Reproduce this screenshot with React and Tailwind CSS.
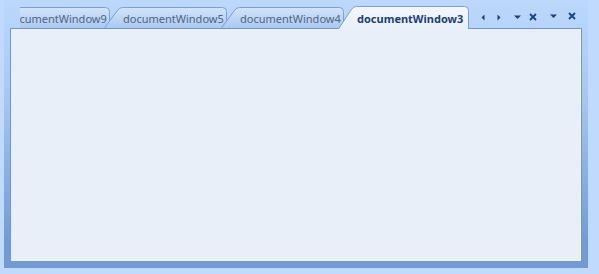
import React from "react";

const FONT = { fontFamily: '"Noto Sans", "Open Sans", sans-serif' };

function Tab({ label, width, active }) {
  const H = active ? 23 : 21;
  const W = width;
  const d = `M0.5,${H} L13,4 Q15,0.5 18.5,0.5 L${W - 4.5},0.5 Q${W - 0.5},0.5 ${W - 0.5},4.5 L${W - 0.5},${H}`;
  const id = active ? "gA" : "gI";
  return (
    <div
      className={`relative shrink-0 flex items-center -mr-[6px] ${active ? "h-[23px] z-10" : "h-[21px] mb-[1px]"}`}
      style={{ width: W }}
    >
      <svg className="absolute inset-0" width={W} height={H} viewBox={`0 0 ${W} ${H}`}>
        <defs>
          <linearGradient id="gI" x1="0" y1="0" x2="0" y2="1">
            <stop offset="0" stopColor="#d3e4fa" />
            <stop offset="1" stopColor="#abc9f1" />
          </linearGradient>
          <linearGradient id="gA" x1="0" y1="0" x2="0" y2="1">
            <stop offset="0" stopColor="#f3f6fc" />
            <stop offset="1" stopColor="#e9eff9" />
          </linearGradient>
        </defs>
        <path d={d + " Z"} fill={`url(#${id})`} stroke="none" />
        <path d={d} fill="none" stroke="#7b9fd6" strokeWidth="1" />
      </svg>
      <span
        className={`relative pl-[19px] pt-[1px] text-[11px] leading-none whitespace-nowrap ${active ? "font-bold text-[#1d3f72]" : "text-[#4f6584]"}`}
        style={FONT}
      >
        {label}
      </span>
    </div>
  );
}

const C = "#15428b";

export default function App() {
  return (
    <div className="w-[599px] h-[274px] bg-[#bfdafd] pl-[4px] pr-[11px] pb-[6px] flex overflow-hidden">
      <div className="flex-1 flex flex-col px-[6px] pb-[6px] bg-[linear-gradient(to_bottom,#bcd8fc_0%,#a8c8f2_35%,#86abe0_70%,#729bd6_90%)]">
        <div className="h-[29px] -mb-px flex items-end relative z-10">
          <div className="ml-[10px] w-[456px] h-full overflow-hidden flex items-end">
            <div className="flex items-end -ml-[33px]">
              <Tab label="documentWindow9" width={123} />
              <Tab label="documentWindow5" width={123} />
              <Tab label="documentWindow4" width={123} />
              <Tab label="documentWindow3" width={131} active />
            </div>
          </div>
          <div className="self-start mt-[13px] flex items-center">
            <div className="w-[16px] h-[8px] flex items-center justify-center ml-[-1px]">
              <svg width="4" height="7" viewBox="0 0 4 7"><polygon points="3.5,0.5 3.5,6.5 0.5,3.5" fill={C} /></svg>
            </div>
            <div className="w-[16px] h-[8px] flex items-center justify-center">
              <svg width="4" height="7" viewBox="0 0 4 7"><polygon points="0.5,0.5 0.5,6.5 3.5,3.5" fill={C} /></svg>
            </div>
            <div className="w-[16px] h-[8px] flex items-center justify-center ml-[2px]">
              <svg width="7" height="4" viewBox="0 0 7 4"><polygon points="0,0.5 7,0.5 3.5,4" fill={C} /></svg>
            </div>
            <div className="w-[16px] h-[8px] flex items-center justify-center">
              <svg width="8" height="8" viewBox="0 0 8 8"><path d="M1,1 L7,7 M7,1 L1,7" stroke={C} strokeWidth="1.8" /></svg>
            </div>
            <div className="w-[16px] h-[8px] flex items-center justify-center ml-[4px] -mt-[3px]">
              <svg width="7" height="4" viewBox="0 0 7 4"><polygon points="0,0.5 7,0.5 3.5,4" fill={C} /></svg>
            </div>
            <div className="w-[16px] h-[8px] flex items-center justify-center ml-[3px] -mt-[2px]">
              <svg width="8" height="8" viewBox="0 0 8 8"><path d="M1,1 L7,7 M7,1 L1,7" stroke={C} strokeWidth="1.8" /></svg>
            </div>
          </div>
        </div>
        <div className="flex-1 border border-[#6f96d0] bg-[#e9eff9]">
          <div className="h-full border-r border-b border-[#f4f8fd]" />
        </div>
      </div>
    </div>
  );
}
